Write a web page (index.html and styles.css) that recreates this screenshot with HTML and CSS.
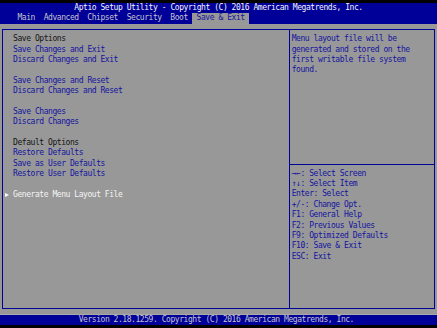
FILE: index.html
```html
<!DOCTYPE html>
<html lang="en">
<head>
<meta charset="UTF-8" />
<meta name="viewport" content="width=device-width, initial-scale=1" />
<title>Aptio Setup Utility - Save &amp; Exit</title>
<link rel="stylesheet" href="styles.css">
</head>
<body>

<div class="screen">
  <div class="title">Aptio Setup Utility - Copyright (C) 2016 American Megatrends, Inc.</div>

  <div class="tabs">
    <span class="tab">Main</span>
    <span class="tab">Advanced</span>
    <span class="tab">Chipset</span>
    <span class="tab">Security</span>
    <span class="tab">Boot</span>
    <span class="tab active">Save &amp; Exit</span>
  </div>

  <div class="main">
    <div class="frame">
      <div class="menu">
        <div class="row label">Save Options</div>
        <div class="row item">Save Changes and Exit</div>
        <div class="row item">Discard Changes and Exit</div>
        <div class="row"></div>
        <div class="row item">Save Changes and Reset</div>
        <div class="row item">Discard Changes and Reset</div>
        <div class="row"></div>
        <div class="row item">Save Changes</div>
        <div class="row item">Discard Changes</div>
        <div class="row"></div>
        <div class="row label">Default Options</div>
        <div class="row item">Restore Defaults</div>
        <div class="row item">Save as User Defaults</div>
        <div class="row item">Restore User Defaults</div>
        <div class="row"></div>
        <div class="row item selected"><span class="pointer"><i></i></span>Generate Menu Layout File</div>
      </div>

      <div class="side">
        <div class="help">
          <div class="row">Menu layout file will be</div>
          <div class="row">generated and stored on the</div>
          <div class="row">first writable file system</div>
          <div class="row">found.</div>
        </div>
        <div class="keys">
          <div class="row">→←: Select Screen</div>
          <div class="row">↑↓: Select Item</div>
          <div class="row">Enter: Select</div>
          <div class="row">+/-: Change Opt.</div>
          <div class="row">F1: General Help</div>
          <div class="row">F2: Previous Values</div>
          <div class="row">F9: Optimized Defaults</div>
          <div class="row">F10: Save &amp; Exit</div>
          <div class="row">ESC: Exit</div>
        </div>
      </div>
    </div>
  </div>

  <div class="footer">Version 2.18.1259. Copyright (C) 2016 American Megatrends, Inc.</div>
</div>

</body>
</html>
```

FILE: styles.css
```css
/* text console: 100 x 31 cells */
:root {
  --cw: 4.37px;
  --rh: 10.39px;
  --blue: #000098;
  --gray: #989898;
}
body {
  margin: 0;
  padding-top: 3px;
  background: #000;
  font-family: "DejaVu Sans Mono", monospace;
  font-size: 8px;
  letter-spacing: -0.446px;
  overflow: hidden;
}
.screen {
  width: calc(var(--cw) * 100);
}
.row {
  height: var(--rh);
  line-height: var(--rh);
  white-space: pre;
}
.title, .tabs, .footer {
  background: var(--blue);
  height: var(--rh);
  line-height: var(--rh);
  white-space: pre;
}
.title {
  color: #f4f4f4;
  padding-left: calc(var(--cw) * 17);
}
.tabs {
  display: flex;
  padding-left: calc(var(--cw) * 3);
}
.tab {
  color: #c4c4cc;
  padding: 0 var(--cw);
}
.tab.active {
  background: var(--gray);
  color: #1414a0;
}
.main {
  background: var(--gray);
  height: calc(var(--rh) * 28);
  padding: calc(var(--rh) / 2) calc(var(--cw) / 2);
  box-sizing: border-box;
}
.frame {
  height: 100%;
  box-sizing: border-box;
  border: 1px solid var(--blue);
  display: grid;
  grid-template-columns: calc(var(--cw) * 65.75) 1fr;
}
.menu {
  border-right: 1px solid var(--blue);
  padding: calc(var(--rh) / 2 - 1px) 0 0 calc(var(--cw) * 2.5 - 1px);
}
.label {
  color: #141414;
}
.item {
  color: #1414a0;
}
.item.selected {
  color: #f4f4f4;
  margin-left: calc(var(--cw) * -2);
}
.pointer {
  display: inline-block;
  width: calc(var(--cw) * 2);
  vertical-align: top;
}
.pointer i {
  display: block;
  width: 0;
  height: 0;
  margin: 3px 0 0 0.5px;
  border-left: 4px solid #fff;
  border-top: 2.5px solid transparent;
  border-bottom: 2.5px solid transparent;
}
.side {
  color: #1414a0;
  padding-left: calc(var(--cw) / 2 - 1px);
}
.help {
  height: calc(var(--rh) * 13 - 0.5px);
  box-sizing: border-box;
  border-bottom: 1px solid var(--blue);
  margin-left: calc(var(--cw) / -2 + 1px);
  padding: calc(var(--rh) / 2 - 1px) 0 0 calc(var(--cw) / 2 - 1px);
}
.keys {
  padding-top: calc(var(--rh) / 2 - 1px);
}
.footer {
  color: #c4c4cc;
  padding-left: calc(var(--cw) * 18);
  box-shadow: 0 -1px 0 #a9a9a9;
}
```
